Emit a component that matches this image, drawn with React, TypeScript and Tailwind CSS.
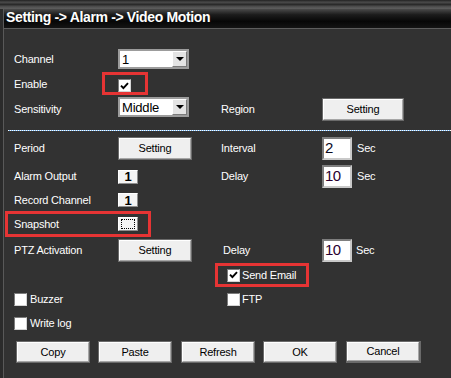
import React from "react";

const Check = () => (
  <svg width="9" height="8" viewBox="0 0 9 8" className="block">
    <path d="M1 3.6 L3.4 6.2 L8 1.2" fill="none" stroke="#000" strokeWidth="1.9" />
  </svg>
);

function Checkbox({ checked }: { checked?: boolean }) {
  return (
    <div className="w-[13px] h-[13px] shrink-0 bg-white border border-t-[#7c7c7c] border-l-[#7c7c7c] border-r-[#d4d4d4] border-b-[#d4d4d4] flex items-center justify-center">
      {checked && <Check />}
    </div>
  );
}

function Select({ value }: { value: string }) {
  return (
    <div className="w-[71px] h-[20px] bg-white border-2 border-[#9c9c9c] flex items-center self-start">
      <span className="flex-1 pl-[2px] text-[13px] leading-none text-black">{value}</span>
      <div className="w-[15px] h-[16px] bg-[#e4e4e4] border border-t-white border-l-white border-r-[#7a7a7a] border-b-[#7a7a7a] flex items-center justify-center">
        <div className="w-0 h-0 border-l-[4px] border-r-[4px] border-t-[4px] border-l-transparent border-r-transparent border-t-black" />
      </div>
    </div>
  );
}

function Btn({ label, className }: { label: string; className: string }) {
  return (
    <div className={`border border-[#6a6a6a] ${className}`}>
      <div className="w-full h-full bg-[#efefef] border border-t-white border-l-white border-r-[#a6a6a6] border-b-[#a6a6a6] flex items-center justify-center text-black text-[11px] tracking-[-0.2px]">
        {label}
      </div>
    </div>
  );
}

function NumInput({ value, color }: { value: string; color: string }) {
  return (
    <div className="w-[30px] h-[23px] bg-white border-2 border-t-[#7e7e7e] border-l-[#7e7e7e] border-r-[#c9c9c9] border-b-[#c9c9c9] pl-[1px] pt-[1px]">
      <span className={`block text-[15px] leading-none tracking-[-0.6px] ${color}`}>{value}</span>
    </div>
  );
}

function OneBox({ focus }: { focus?: boolean }) {
  return (
    <div className="w-[20px] h-[14px] bg-[#f4f4f4] border border-t-white border-l-white border-r-[#8e8e8e] border-b-[#8e8e8e] flex items-center justify-center">
      {focus ? (
        <div className="w-[14px] h-[10px] border border-dotted border-black" />
      ) : (
        <span className="text-black font-bold text-[13px] leading-none">1</span>
      )}
    </div>
  );
}

const Sec = () => <span className="ml-[5px]">Sec</span>;

export default function App() {
  return (
    <div className="w-[451px] h-[378px] overflow-hidden bg-[#323232] text-white text-[11px] tracking-[-0.2px] font-['Liberation_Sans',Arial,sans-serif] flex flex-col">
      <div className="h-[9px] shrink-0 bg-[linear-gradient(to_bottom,#222,#4a4a4a_25%,#2a2a2a_50%,#505050_75%,#5e5e5e)]" />
      <div className="flex flex-1">
        <div className="w-[3px] bg-[#2b2b2b]" />
        <div className="flex-1 flex flex-col border-l border-[#595959]">
          <div className="h-[20px] shrink-0 flex items-center pl-[2px] pb-[3px] bg-[linear-gradient(to_bottom,#4a4a4a,#1c1c1c_30%,#070707_65%,#141414)] border-b border-[#5e5e5e]">
            <span className="text-white font-bold text-[14px] tracking-[-0.35px]">Setting -&gt; Alarm -&gt; Video Motion</span>
          </div>

          <div className="flex flex-col pt-[20px]">
            <div className="flex items-center h-[20px] pl-[10px]">
              <span className="w-[104px]">Channel</span>
              <Select value="1" />
            </div>

            <div className="flex items-center h-[24px] mt-[3px] pl-[10px]">
              <span className="w-[88px]">Enable</span>
              <div className="w-[46px] h-[23px] self-start border-[3px] border-[#e63434] pl-[13px] pt-[4px]">
                <Checkbox checked />
              </div>
            </div>

            <div className="flex items-center h-[24px] mt-[1px] pl-[10px]">
              <span className="w-[104px]">Sensitivity</span>
              <div className="w-[103px] flex self-start">
                <Select value="Middle" />
              </div>
              <span className="w-[101px]">Region</span>
              <Btn label="Setting" className="w-[82px] h-[23px] self-start mt-[1px]" />
            </div>

            <div className="h-[1px] mt-[9px] ml-[4px] bg-[repeating-linear-gradient(90deg,#ffffff_0_1px,#6fb2f2_1px_2px)]" />

            <div className="flex items-center h-[23px] mt-[6px] pl-[10px]">
              <span className="w-[104px]">Period</span>
              <div className="w-[103px]">
                <Btn label="Setting" className="w-[74px] h-[23px]" />
              </div>
              <span className="w-[101px]">Interval</span>
              <NumInput value="2" color="text-[#0a0a1e]" />
              <Sec />
            </div>

            <div className="flex items-center h-[23px] mt-[5px] pl-[10px]">
              <span className="w-[104px]">Alarm Output</span>
              <div className="w-[103px]">
                <OneBox />
              </div>
              <span className="w-[101px]">Delay</span>
              <NumInput value="10" color="text-[#2a0030]" />
              <Sec />
            </div>

            <div className="flex items-center h-[14px] mt-[5px] pl-[10px]">
              <span className="w-[104px]">Record Channel</span>
              <OneBox />
            </div>

            <div className="flex items-center w-[146px] h-[26px] mt-[4px] ml-[1px] border-[3px] border-[#e63434] pl-[6px]">
              <span className="w-[104px]">Snapshot</span>
              <OneBox focus />
            </div>

            <div className="flex items-center h-[23px] mt-[2px] pl-[10px]">
              <span className="w-[104px]">PTZ Activation</span>
              <div className="w-[105px]">
                <Btn label="Setting" className="w-[74px] h-[23px]" />
              </div>
              <span className="w-[99px]">Delay</span>
              <NumInput value="10" color="text-[#2a0030]" />
              <span className="ml-[4px]">Sec</span>
            </div>

            <div className="flex items-center gap-[2px] w-[94px] h-[24px] mt-[1px] ml-[211px] border-[3px] border-[#e63434] pl-[9px]">
              <Checkbox checked />
              <span>Send Email</span>
            </div>

            <div className="flex items-center h-[25px] pl-[10px]">
              <div className="w-[213px] flex items-center gap-[3px]">
                <Checkbox />
                <span>Buzzer</span>
              </div>
              <div className="flex items-center gap-[2px]">
                <Checkbox />
                <span>FTP</span>
              </div>
            </div>

            <div className="flex items-center gap-[3px] h-[22px] pl-[10px]">
              <Checkbox />
              <span>Write log</span>
            </div>

            <div className="flex items-center h-[22px] mt-[7px] pl-[12px]">
              <Btn label="Copy" className="w-[74px] h-[22px]" />
              <Btn label="Paste" className="w-[74px] h-[22px] ml-[8px]" />
              <Btn label="Refresh" className="w-[74px] h-[22px] ml-[9px]" />
              <Btn label="OK" className="w-[74px] h-[22px] ml-[8px]" />
              <Btn label="Cancel" className="w-[75px] h-[22px] ml-[9px] border-r-2 border-b-2" />
            </div>
          </div>
        </div>
      </div>
    </div>
  );
}
